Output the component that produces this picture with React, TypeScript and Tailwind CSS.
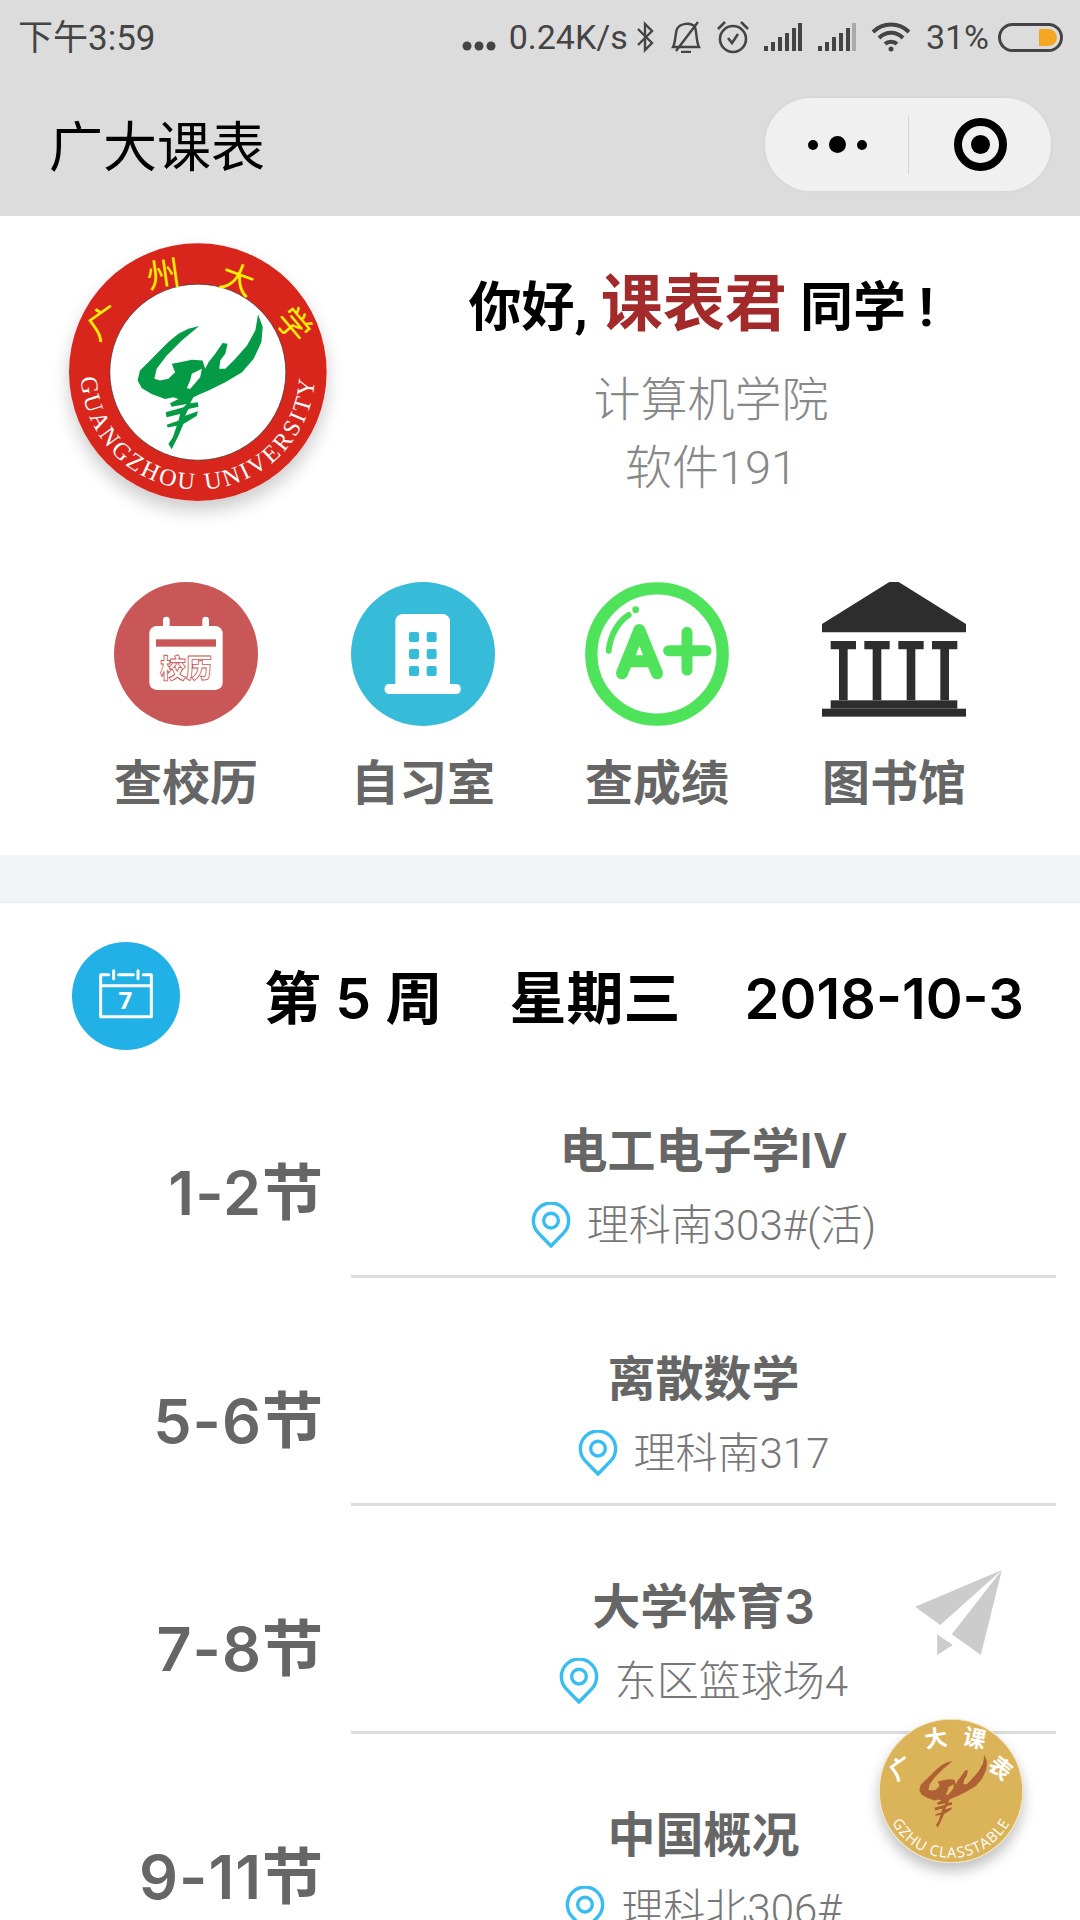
const sans = "font-['Roboto','Noto_Sans_CJK_SC',sans-serif]";
const heading = "font-['Inter','Noto_Sans_CJK_SC',sans-serif]";

const MARK =
  'M222 77 L190 85 L160 100 L130 125 L100 155 L70 185 L45 210 L38 240 L50 262 L80 280 L120 295 L145 290 L160 295 L135 308 L140 318 L185 310 L175 320 L122 335 L125 350 L165 340 L160 360 L125 372 L128 380 L155 375 L143 410 L130 430 L140 445 L160 405 L175 370 L215 345 L218 332 L180 345 L190 325 L220 318 L218 305 L195 308 L205 290 L225 280 L250 270 L300 245 L350 215 L385 175 L408 125 L412 80 L398 42 L390 90 L365 135 L330 175 L300 205 L282 205 L285 180 L300 160 L307 130 L292 128 L270 160 L250 185 L240 205 L232 180 L200 178 L165 185 L140 190 L150 215 L130 235 L105 240 L88 235 L95 205 L125 165 L170 120 Z';
const MARK_HOLE = 'M200 220 L230 205 L225 230 L195 265 L185 262 L195 240 Z';

const Logo = () => (
  <div className="h-[258px] w-[258px] shrink-0 rounded-full shadow-[0_10px_18px_rgba(0,0,0,0.2)]">
    <svg viewBox="88 69 771 771" className="h-full w-full">
      <circle cx="473" cy="455" r="385" fill="#d9261c" />
      <circle cx="473" cy="455" r="263" fill="#fff" stroke="#333" strokeWidth="2" />
      <g transform="translate(255 240)">
        <path d={MARK} fill="#059a45" />
        <path d={MARK_HOLE} fill="#fff" />
      </g>
      <defs>
        <path id="logo-arc" d="M135 365 A350 350 0 1 0 811 365" />
      </defs>
      <text fill="#fff" fontFamily="'Liberation Serif',serif" fontSize="72" letterSpacing="8" textAnchor="middle">
        <textPath href="#logo-arc" startOffset="50%">GUANGZHOU UNIVERSITY</textPath>
      </text>
      <g fill="#fff000" fontFamily="'Noto Sans CJK SC',sans-serif" fontSize="100" textAnchor="middle" dominantBaseline="central">
        <text transform="translate(189 300) rotate(-35)">广</text>
        <text transform="translate(369 156) rotate(-8)">州</text>
        <text transform="translate(594 171) rotate(20)">大</text>
        <text transform="translate(765 309) rotate(50)">学</text>
      </g>
    </svg>
  </div>
);

const Badge = () => (
  <div className="absolute left-[879px] top-[1719px] h-[144px] w-[144px] rounded-full shadow-[0_8px_14px_rgba(0,0,0,0.25)]">
    <svg viewBox="59 538 430 430" className="h-full w-full">
      <circle cx="274" cy="753" r="214" fill="#dbb358" stroke="#f3e6c4" strokeWidth="3" />
      <g transform="translate(159 622) scale(0.54)">
        <path d={MARK} fill="#af6035" />
        <path d={MARK_HOLE} fill="#dbb358" />
      </g>
      <g fill="#fff" fontFamily="'Noto Sans CJK SC',sans-serif" fontSize="68" fontWeight="700" textAnchor="middle" dominantBaseline="central">
        <text transform="translate(122 682) rotate(-35)">广</text>
        <text transform="translate(228 592) rotate(-8)">大</text>
        <text transform="translate(345 592) rotate(12)">课</text>
        <text transform="translate(424 682) rotate(40)">表</text>
      </g>
      <defs>
        <path id="badge-arc" d="M77 718 A200 200 0 1 0 471 718" />
      </defs>
      <text fill="#fff" fontFamily="'Open Sans',sans-serif" fontSize="44" letterSpacing="3" textAnchor="middle">
        <textPath href="#badge-arc" startOffset="50%">GZHU CLASSTABLE</textPath>
      </text>
    </svg>
  </div>
);

const CalendarIcon = () => (
  <svg viewBox="0 0 432 432" className="h-[144px] w-[144px]">
    <circle cx="216" cy="216" r="216" fill="#ca5757" />
    <rect x="106" y="132" width="220" height="192" rx="22" fill="#fff" />
    <path d="M157 114 V140 M275 114 V140" stroke="#fff" strokeWidth="20" strokeLinecap="round" />
    <rect x="126" y="172" width="180" height="22" fill="#ca5757" />
    <text x="216" y="288" fill="#fff" stroke="#ca5757" strokeWidth="2.5" fontFamily="'Noto Sans CJK SC',sans-serif" fontSize="78" fontWeight="900" textAnchor="middle">
      校历
    </text>
  </svg>
);

const BuildingIcon = () => (
  <svg viewBox="0 0 432 432" className="h-[144px] w-[144px]">
    <circle cx="216" cy="216" r="216" fill="#36bbd9" />
    <path d="M133 320 V118 A22 22 0 0 1 155 96 H275 A22 22 0 0 1 297 118 V320 Z" fill="#fff" />
    <rect x="101" y="306" width="228" height="30" rx="13" fill="#fff" />
    {[150, 201, 252].map((y) =>
      [174, 227].map((x) => <rect key={`${x}-${y}`} x={x} y={y} width="30" height="30" rx="6" fill="#36bbd9" />),
    )}
  </svg>
);

const GradeIcon = () => (
  <svg viewBox="0 0 432 432" className="h-[144px] w-[144px]" fill="none" stroke="#4ee35a" strokeLinecap="round" strokeLinejoin="round">
    <circle cx="216" cy="216" r="197" strokeWidth="37" />
    <path d="M111 274 L163 144 L216 274 M128 238 H198" strokeWidth="36" />
    <path d="M251 206 H363 M306 151 V264" strokeWidth="33" />
    <path d="M71 206 C76 160 98 120 131 99" strokeWidth="18" />
    <circle cx="152" cy="83" r="10" fill="#4ee35a" stroke="none" />
  </svg>
);

const LibraryIcon = () => (
  <svg viewBox="0 0 432 432" className="h-[144px] w-[144px]" fill="#2d2d2d">
    <path d="M0 126 L202 0 H230 L432 126 V151 H0 Z" />
    {[26, 127, 229, 330].map((x) => (
      <path key={x} d={`M${x} 177 H${x + 76} V202 H${x + 51} V355 H${x + 25} V202 H${x} Z`} />
    ))}
    <rect x="26" y="355" width="380" height="25" />
    <rect x="0" y="380" width="432" height="24" />
  </svg>
);

const WeekIcon = () => (
  <svg viewBox="0 0 324 324" className="h-[108px] w-[108px] shrink-0">
    <circle cx="162" cy="162" r="162" fill="#22b1e6" />
    <g fill="none" stroke="#fff" strokeWidth="9" strokeLinecap="round" strokeLinejoin="round">
      <path d="M110 98 H86 V224 H238 V98 H214 M140 98 H184 M86 131 H238" />
      <path d="M125 86 V110 M198 86 V110" />
    </g>
    <text x="160" y="202" fill="#fff" fontFamily="'Open Sans',sans-serif" fontSize="72" fontWeight="700" textAnchor="middle">
      7
    </text>
  </svg>
);

const PinIcon = () => (
  <svg viewBox="0 0 40 48" className="h-[47px] w-[40px] shrink-0" fill="none" stroke="#38bdf2" strokeWidth="3.5">
    <path d="M20 45 L7 31.5 A18 18 0 1 1 33 31.5 Z" strokeLinejoin="round" />
    <circle cx="20" cy="19" r="7.5" />
  </svg>
);

const StatusIcons = () => (
  <div className="flex items-center text-[#444]">
    <svg viewBox="0 0 34 10" className="mt-[18px] h-[10px] w-[34px]" fill="#444">
      <circle cx="5" cy="5" r="4.5" />
      <circle cx="17" cy="5" r="4.5" />
      <circle cx="29" cy="5" r="4.5" />
    </svg>
    <span className="ml-[13px] text-[34px] leading-none">0.24K/s</span>
    <svg viewBox="0 0 22 32" className="ml-[6px] h-[32px] w-[22px]" fill="none" stroke="#444" strokeWidth="2.4">
      <path d="M4 8 L18 22 L11 29 V3 L18 10 L4 24" />
    </svg>
    <svg viewBox="0 0 32 32" className="ml-[14px] h-[32px] w-[32px]" fill="none" stroke="#444" strokeWidth="2.4">
      <path d="M3 26 C6 20 5 13 7 8 C10 2 21 1 25 6 C27 12 26 20 29 26 Z M11 31 H21 M28 1 L6 30" />
    </svg>
    <svg viewBox="0 0 34 34" className="ml-[14px] h-[34px] w-[34px]" fill="none" stroke="#444" strokeWidth="2.6">
      <circle cx="17" cy="19" r="13" />
      <path d="M12 18 L16 23 L22 14 M2 9 L9 2 M32 9 L25 2" />
    </svg>
    <svg viewBox="0 0 39 28" className="ml-[14px] h-[28px] w-[39px]" fill="#444">
      <path d="M0 28 H4 V23 H0 Z M7 28 H11 V19 H7 Z M14 28 H18 V14 H14 Z M21 28 H25 V10 H21 Z M28 28 H32 V5 H28 Z M34 28 H38 V0 H34 Z" />
    </svg>
    <svg viewBox="0 0 39 28" className="ml-[15px] h-[28px] w-[39px]" fill="#444">
      <path d="M0 28 H4 V23 H0 Z M7 28 H11 V19 H7 Z M14 28 H18 V14 H14 Z M21 28 H25 V10 H21 Z M28 28 H32 V5 H28 Z" />
      <path d="M34 28 H38 V0 H34 Z" fill="#aaa" />
    </svg>
    <svg viewBox="0 0 40 30" className="ml-[14px] h-[30px] w-[40px]" fill="none" stroke="#444" strokeWidth="4">
      <path d="M2 10 C12 0 28 0 38 10 M8 16 C15 9 25 9 32 16 M14 22 C17 19 23 19 26 22" />
      <circle cx="20" cy="27" r="2.5" fill="#444" stroke="none" />
    </svg>
    <span className="ml-[15px] text-[34px] leading-none">31%</span>
    <div className="relative ml-[9px] h-[29px] w-[65px] rounded-full border-[3px] border-[#444]">
      <div className="absolute bottom-[3px] right-[3px] top-[3px] w-[18px] rounded-r-full bg-[#f5a623]" />
    </div>
  </div>
);

const entries = [
  { icon: <CalendarIcon />, label: '查校历', gap: 'ml-[114px]' },
  { icon: <BuildingIcon />, label: '自习室', gap: 'ml-[93px]' },
  { icon: <GradeIcon />, label: '查成绩', gap: 'ml-[90px]' },
  { icon: <LibraryIcon />, label: '图书馆', gap: 'ml-[93px]' },
];

const courses = [
  { time: '1-2节', name: '电工电子学IV', room: '理科南303#(活)' },
  { time: '5-6节', name: '离散数学', room: '理科南317' },
  { time: '7-8节', name: '大学体育3', room: '东区篮球场4' },
  { time: '9-11节', name: '中国概况', room: '理科北306#' },
];

export default function App() {
  return (
    <div className={`relative h-[1920px] w-[1080px] overflow-hidden bg-white ${sans}`}>
      {/* 상단 바 */}
      <header className="h-[216px] bg-[#dcdcdc]">
        <div className="flex h-[74px] items-center justify-between pl-[18px] pr-[17px]">
          <span className="pt-[2px] text-[35px] leading-none text-[#444]">下午3:59</span>
          <StatusIcons />
        </div>
        <div className="flex h-[142px] items-start justify-between pl-[49px] pr-[27px]">
          <h1 className="pt-[41px] text-[54px] font-normal leading-[68px] text-black">广大课表</h1>
          <div className="mt-[22px] flex h-[97px] w-[290px] items-center rounded-full border-2 border-[#d8d8d8] bg-[#f0f0f0]">
            <div className="flex w-[143px] items-center justify-center gap-[11px] pl-[1px]">
              <span className="h-[10px] w-[10px] rounded-full bg-black" />
              <span className="h-[17px] w-[17px] rounded-full bg-black" />
              <span className="h-[10px] w-[10px] rounded-full bg-black" />
            </div>
            <div className="h-[58px] w-px bg-[#d4d4d4]" />
            <div className="flex flex-1 items-center justify-center">
              <div className="flex h-[53px] w-[53px] items-center justify-center rounded-full border-[8px] border-black">
                <span className="h-[19px] w-[19px] rounded-full bg-black" />
              </div>
            </div>
          </div>
        </div>
      </header>

      {/* 프로필 + 바로가기 */}
      <section className="h-[639px] pt-[27px]">
        <div className="flex h-[259px] pl-[69px]">
          <Logo />
          <div className="ml-[15px] flex-1 pt-[30px] text-center">
            <p className="-ml-[20px] h-[70px] whitespace-nowrap text-[53px] font-bold leading-[70px] text-black">
              你好, <span className="text-[62px] leading-none text-[#a32a2a]">课表君</span> 同学 !
            </p>
            <p className="mt-[23px] text-[47px] font-light leading-[68px] text-[#888]">计算机学院</p>
            <p className="text-[47px] font-light leading-[68px] text-[#888]">软件191</p>
          </div>
        </div>
        <div className="mt-[80px] flex">
          {entries.map((entry) => (
            <div key={entry.label} className={`flex w-[144px] flex-col items-center ${entry.gap}`}>
              {entry.icon}
              <span className="mt-[28px] whitespace-nowrap text-[48px] font-bold leading-[60px] text-[#666]">
                {entry.label}
              </span>
            </div>
          ))}
        </div>
      </section>

      <div className="h-[48px] border-b border-[#e8ebee] bg-[#f2f5f8]" />

      {/* 오늘 날짜 */}
      <div className="flex h-[147px] items-start pl-[72px] pt-[39px]">
        <WeekIcon />
        <div className={`ml-[84px] mt-[20px] flex text-[57px] font-semibold leading-[74px] text-black ${heading}`}>
          <span>第 5 周</span>
          <span className="ml-[67px]">星期三</span>
          <span className="ml-[64px] text-[56px]">2018-10-3</span>
        </div>
      </div>

      {/* 오늘 수업 */}
      {courses.map((course) => (
        <div key={course.time} className="flex h-[228px]">
          <div className={`w-[324px] pt-[107px] text-right text-[61px] font-semibold leading-[72px] tracking-[1px] text-[#666] ${heading}`}>
            {course.time}
          </div>
          <div className="ml-[27px] mr-[24px] flex-1 border-b-[3px] border-[#dcdcdc] pt-[68px] text-center">
            <p className={`text-[48px] font-semibold leading-[66px] text-[#666] ${heading}`}>{course.name}</p>
            <div className="mt-[10px] flex items-center justify-center gap-[16px]">
              <PinIcon />
              <span className="pt-[2px] text-[42px] font-light leading-[60px] text-[#777]">{course.room}</span>
            </div>
          </div>
        </div>
      ))}

      <svg viewBox="165 90 260 255" className="absolute left-[915px] top-[1570px] h-[85px] w-[87px]" fill="#ccc">
        <path d="M165 200 L425 90 L240 255 Z" />
        <path d="M425 90 L362 345 L275 283 Z" />
        <path d="M231 283 L278 315 L231 345 Z" />
      </svg>
      <Badge />
    </div>
  );
}
